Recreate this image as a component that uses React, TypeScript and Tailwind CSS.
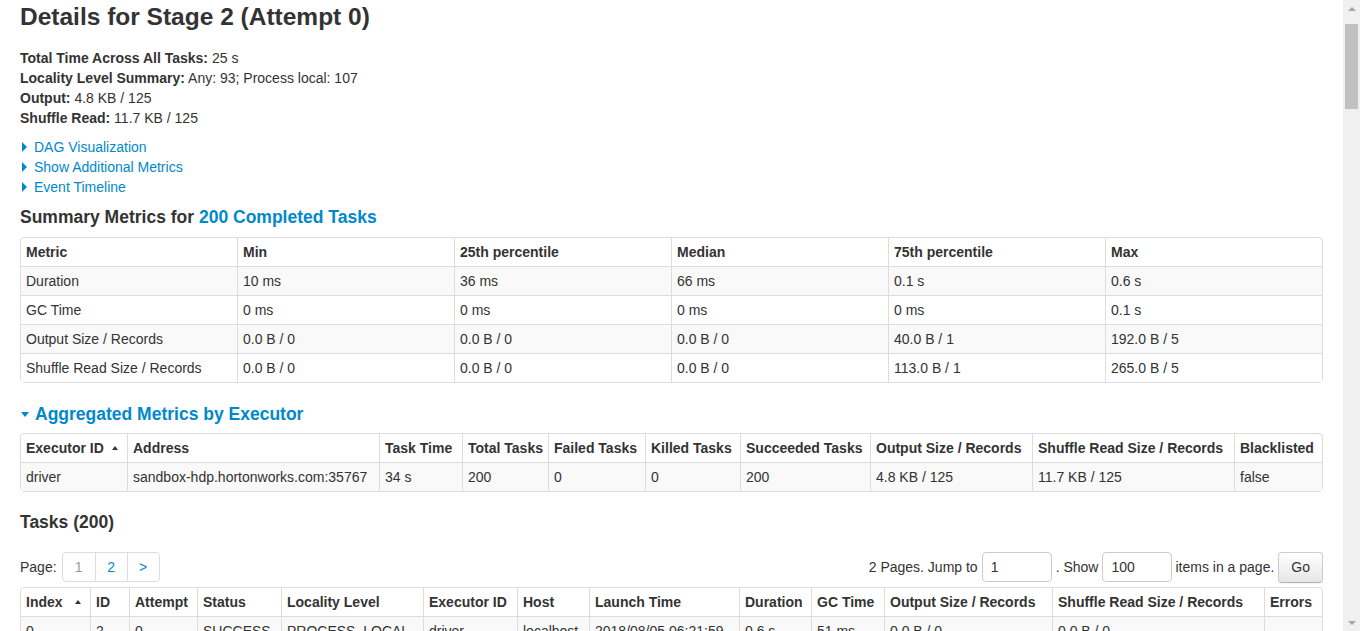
import type { ReactNode } from "react";

const TH = "border-l border-[#ddd] first:border-l-0 px-[5px] py-[4px] text-left font-bold leading-5 whitespace-nowrap overflow-hidden";
const TD = "border-t border-l border-[#ddd] first:border-l-0 px-[5px] py-[4px] text-left leading-5 whitespace-nowrap overflow-hidden";

function SortUp({ gap }: { gap: string }) {
  return <span className={`inline-block align-middle ${gap} border-x-[3px] border-x-transparent border-b-[4px] border-b-[#333] mb-[3px]`} />;
}

function Closed() {
  return <span className="inline-block ml-[2px] mr-[7px] border-y-[5px] border-y-transparent border-l-[5px] border-l-[#0088cc]" />;
}

function DataTable({ cols, head, rows }: { cols: number[]; head: ReactNode[]; rows: string[][] }) {
  return (
    <table className="w-full table-fixed border-separate border-spacing-0 border border-[#ddd] rounded-[4px]">
      <colgroup>
        {cols.map((w, i) => (
          <col key={i} style={{ width: w }} />
        ))}
      </colgroup>
      <thead>
        <tr>
          {head.map((h, i) => (
            <th key={i} className={TH}>
              {h}
            </th>
          ))}
        </tr>
      </thead>
      <tbody>
        {rows.map((r, i) => (
          <tr key={i} className={i % 2 === 0 ? "bg-[#f9f9f9]" : "bg-white"}>
            {r.map((c, j) => (
              <td key={j} className={TD}>
                {c}
              </td>
            ))}
          </tr>
        ))}
      </tbody>
    </table>
  );
}

export default function App() {
  return (
    <div className="flex h-[631px] overflow-hidden bg-white text-[14px] leading-5 text-[#333] font-['Liberation_Sans',Arial,sans-serif]">
      <div className="w-[1343px] shrink-0 px-[20px]">
        <h3 className="text-[24.5px] leading-[34px] font-bold">Details for Stage 2 (Attempt 0)</h3>

        <ul className="mt-[14px]">
          <li><strong>Total Time Across All Tasks:</strong> 25 s</li>
          <li><strong>Locality Level Summary:</strong> Any: 93; Process local: 107</li>
          <li><strong>Output:</strong> 4.8 KB / 125</li>
          <li><strong>Shuffle Read:</strong> 11.7 KB / 125</li>
        </ul>

        <div className="mt-[9px] text-[#0088cc]">
          <div className="flex items-center"><Closed />DAG Visualization</div>
          <div className="flex items-center"><Closed />Show Additional Metrics</div>
          <div className="flex items-center"><Closed />Event Timeline</div>
        </div>

        <h4 className="mt-[10px] text-[17.5px] leading-5 font-bold">
          Summary Metrics for <span className="text-[#0088cc]">200 Completed Tasks</span>
        </h4>
        <div className="mt-[10px]">
          <DataTable
            cols={[216, 217, 217, 217, 217, 217]}
            head={["Metric", "Min", "25th percentile", "Median", "75th percentile", "Max"]}
            rows={[
              ["Duration", "10 ms", "36 ms", "66 ms", "0.1 s", "0.6 s"],
              ["GC Time", "0 ms", "0 ms", "0 ms", "0 ms", "0.1 s"],
              ["Output Size / Records", "0.0 B / 0", "0.0 B / 0", "0.0 B / 0", "40.0 B / 1", "192.0 B / 5"],
              ["Shuffle Read Size / Records", "0.0 B / 0", "0.0 B / 0", "0.0 B / 0", "113.0 B / 1", "265.0 B / 5"],
            ]}
          />
        </div>

        <h4 className="mt-[21px] h-5 flex items-center text-[17.5px] leading-5 font-bold text-[#0088cc]">
          <span className="inline-block ml-[1px] mr-[6px] border-x-[4px] border-x-transparent border-t-[5px] border-t-[#0088cc]" />
          Aggregated Metrics by Executor
        </h4>
        <div className="mt-[9px]">
          <DataTable
            cols={[106, 252, 83, 86, 97, 95, 130, 162, 202, 88]}
            head={[
              <span key="e">Executor ID<SortUp gap="ml-[8px]" /></span>,
              "Address",
              "Task Time",
              "Total Tasks",
              "Failed Tasks",
              "Killed Tasks",
              "Succeeded Tasks",
              "Output Size / Records",
              "Shuffle Read Size / Records",
              "Blacklisted",
            ]}
            rows={[["driver", "sandbox-hdp.hortonworks.com:35767", "34 s", "200", "0", "0", "200", "4.8 KB / 125", "11.7 KB / 125", "false"]]}
          />
        </div>

        <h4 className="mt-[20px] text-[17.5px] leading-5 font-bold">Tasks (200)</h4>

        <div className="mt-[20px] h-[30px] flex items-center justify-between">
          <div className="flex items-center">
            <span>Page:</span>
            <div className="ml-[5px] flex border border-[#ddd] rounded-[4px] leading-5">
              <span className="w-[32px] py-[4px] text-center text-[#999]">1</span>
              <span className="w-[32px] py-[4px] text-center text-[#0088cc] border-l border-[#ddd]">2</span>
              <span className="w-[32px] py-[4px] text-center text-[#0088cc] border-l border-[#ddd]">&gt;</span>
            </div>
          </div>
          <div className="flex items-center">
            <span>2 Pages. Jump to</span>
            <div className="ml-[4px] w-[70px] h-[30px] border border-[#ccc] rounded-[4px] px-[8px] py-[4px] leading-5">1</div>
            <span className="ml-[4px]">. Show</span>
            <div className="ml-[4px] w-[70px] h-[30px] border border-[#ccc] rounded-[4px] px-[8px] py-[4px] leading-5">100</div>
            <span className="ml-[3px]">items in a page.</span>
            <button className="ml-[4px] h-[31px] px-[12px] border border-[#ccc] border-b-[#b3b3b3] rounded-[4px] bg-gradient-to-b from-white to-[#e6e6e6] text-[#333] leading-5 shadow-[inset_0_1px_0_rgba(255,255,255,0.2),0_1px_2px_rgba(0,0,0,0.05)]">
              Go
            </button>
          </div>
        </div>

        <div className="mt-[5px]">
          <DataTable
            cols={[69, 39, 68, 84, 142, 94, 72, 150, 72, 73, 168, 212, 58]}
            head={[
              <span key="i">Index<SortUp gap="ml-[12px]" /></span>,
              "ID",
              "Attempt",
              "Status",
              "Locality Level",
              "Executor ID",
              "Host",
              "Launch Time",
              "Duration",
              "GC Time",
              "Output Size / Records",
              "Shuffle Read Size / Records",
              "Errors",
            ]}
            rows={[
              ["0", "2", "0", "SUCCESS", "PROCESS_LOCAL", "driver", "localhost", "2018/08/05 06:21:59", "0.6 s", "51 ms", "0.0 B / 0", "0.0 B / 0", ""],
              ["1", "3", "0", "SUCCESS", "PROCESS_LOCAL", "driver", "localhost", "2018/08/05 06:21:59", "0.6 s", "51 ms", "0.0 B / 0", "0.0 B / 0", ""],
            ]}
          />
        </div>
      </div>

      <div className="w-[17px] shrink-0 h-full bg-[#f0f0f0] flex flex-col items-center">
        <div className="h-[17px] flex items-center justify-center">
          <span className="border-x-[4px] border-x-transparent border-b-[4px] border-b-[#a3a3a3]" />
        </div>
        <div className="mt-[7px] w-[13px] h-[85px] bg-[#c1c1c1]" />
        <div className="flex-1" />
        <div className="h-[17px] flex items-center justify-center">
          <span className="border-x-[4px] border-x-transparent border-t-[4px] border-t-[#a3a3a3]" />
        </div>
      </div>
    </div>
  );
}
